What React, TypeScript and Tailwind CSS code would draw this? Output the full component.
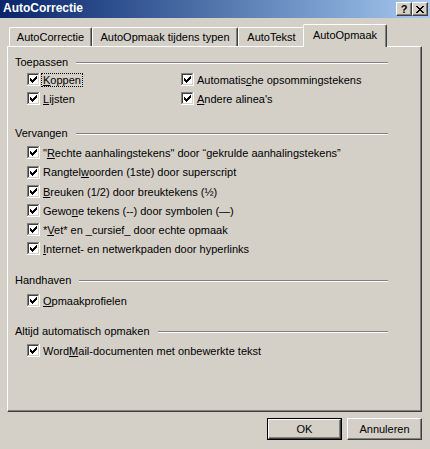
import React from 'react'

// classic 13x13 sunken checkbox with tick, drawn pixel by pixel
const tick: [number, number, number][] = [
  [9, 3, 1],
  [8, 4, 2],
  [3, 5, 1],
  [7, 5, 3],
  [3, 6, 2],
  [6, 6, 3],
  [3, 7, 5],
  [4, 8, 3],
  [5, 9, 1],
]

const CheckBox = () => (
  <svg width="13" height="13" viewBox="0 0 13 13" shapeRendering="crispEdges" className="shrink-0">
    <rect x="0" y="0" width="12" height="1" fill="#808080" />
    <rect x="0" y="0" width="1" height="12" fill="#808080" />
    <rect x="1" y="1" width="10" height="1" fill="#404040" />
    <rect x="1" y="1" width="1" height="10" fill="#404040" />
    <rect x="0" y="12" width="13" height="1" fill="#ffffff" />
    <rect x="12" y="0" width="1" height="13" fill="#ffffff" />
    <rect x="1" y="11" width="11" height="1" fill="#d4d0c8" />
    <rect x="11" y="1" width="1" height="11" fill="#d4d0c8" />
    <rect x="2" y="2" width="9" height="9" fill="#ffffff" />
    {tick.map(([x, y, w], i) => (
      <rect key={i} x={x} y={y} width={w} height="1" fill="#000000" />
    ))}
  </svg>
)

const Option = ({ children, focus = false }: { children: React.ReactNode; focus?: boolean }) => (
  <div className="flex items-center h-[19px]">
    <CheckBox />
    <span
      className={`ml-[1px] px-[1px] leading-[12px] border whitespace-nowrap ${
        focus ? 'border-dotted border-black' : 'border-transparent'
      }`}
    >
      {children}
    </span>
  </div>
)

const GroupHeader = ({ label }: { label: string }) => (
  <div className="flex items-center h-[13px] w-[373px]">
    <span className="leading-[13px] whitespace-nowrap">{label}</span>
    <div className="flex-1 ml-[8px] h-[2px] border-t border-t-[#808080] border-b border-b-white" />
  </div>
)

const Tab = ({ label, className, active = false }: { label: string; className: string; active?: boolean }) =>
  active ? (
    <div
      className={`relative z-10 -mx-[2px] -mb-px h-[23px] bg-[#d4d0c8] border-l border-t border-white border-r border-r-[#404040] shadow-[inset_-1px_0_0_#808080] rounded-t-[2px] pt-[4px] text-center leading-[13px] whitespace-nowrap ${className}`}
    >
      {label}
    </div>
  ) : (
    <div
      className={`h-[19px] bg-[#d4d0c8] border-l border-t border-white border-r border-r-[#404040] shadow-[inset_-1px_0_0_#808080] rounded-t-[2px] pt-[3px] text-center leading-[13px] whitespace-nowrap ${className}`}
    >
      {label}
    </div>
  )

const raised =
  'bg-[#d4d0c8] border-l border-t border-white border-r border-b border-r-[#404040] border-b-[#404040] shadow-[inset_-1px_-1px_0_#808080]'

export default function App() {
  return (
    <div className="w-[430px] h-[449px] overflow-hidden bg-[#d4d0c8] text-black text-[11px] font-['Liberation_Sans',Arial,sans-serif]">
      {/* title bar */}
      <div className="flex h-[18px] bg-gradient-to-r from-[#0a246a] to-[#a6caf0]">
        <span className="pl-[3px] text-[12px] leading-[17px] font-bold text-white">AutoCorrectie</span>
        <div className="ml-auto mr-[2px] mt-[2px] flex">
          <div className={`w-[16px] h-[14px] flex items-center justify-center font-bold text-[11px] leading-none ${raised}`}>
            ?
          </div>
          <div className={`w-[16px] h-[14px] flex items-center justify-center ${raised}`}>
            <svg width="8" height="7" viewBox="0 0 8 7" shapeRendering="crispEdges">
              <path
                d="M0 0h2v1h-2zM6 0h2v1h-2zM1 1h2v1h-2zM5 1h2v1h-2zM2 2h4v1h-4zM3 3h2v1h-2zM2 4h4v1h-4zM1 5h2v1h-2zM5 5h2v1h-2zM0 6h2v1h-2zM6 6h2v1h-2z"
                fill="#000"
              />
            </svg>
          </div>
        </div>
      </div>

      <div className="ml-[7px] w-[415px]">
        {/* tabs */}
        <div className="flex items-end h-[28px] pl-[2px]">
          <Tab label="AutoCorrectie" className="w-[83px]" />
          <Tab label="AutoOpmaak tijdens typen" className="w-[146px]" />
          <Tab label="AutoTekst" className="w-[67px]" />
          <Tab label="AutoOpmaak" className="w-[84px]" active />
        </div>

        {/* panel */}
        <div className="h-[366px] border-l border-t border-white border-r border-b border-r-[#404040] border-b-[#404040] shadow-[inset_-1px_-1px_0_#808080] pl-[7px] pt-[9px]">
          <GroupHeader label="Toepassen" />
          <div className="mt-[1px] pl-[12px] grid grid-cols-[154px_1fr]">
            <Option focus>
              <u>K</u>oppen
            </Option>
            <Option>
              Automatis<u>c</u>he opsommingstekens
            </Option>
            <Option>
              <u>L</u>ijsten
            </Option>
            <Option>
              <u>A</u>ndere alinea's
            </Option>
          </div>

          <div className="mt-[19px]">
            <GroupHeader label="Vervangen" />
          </div>
          <div className="mt-[3px] pl-[12px]">
            <Option>
              "<u>R</u>echte aanhalingstekens" door “gekrulde aanhalingstekens”
            </Option>
            <div className="h-[20px] flex items-center">
              <Option>
                Rangtel<u>w</u>oorden (1ste) door superscript
              </Option>
            </div>
            <Option>
              <u>B</u>reuken (1/2) door breuktekens (½)
            </Option>
            <Option>
              Gewo<u>n</u>e tekens (--) door symbolen (—)
            </Option>
            <Option>
              *<u>V</u>et* en _cursief_ door echte opmaak
            </Option>
            <Option>
              <u>I</u>nternet- en netwerkpaden door hyperlinks
            </Option>
          </div>

          <div className="mt-[16px]">
            <GroupHeader label="Handhaven" />
          </div>
          <div className="mt-[4px] pl-[12px]">
            <Option>
              <u>O</u>pmaakprofielen
            </Option>
          </div>

          <div className="mt-[15px]">
            <GroupHeader label="Altijd automatisch opmaken" />
          </div>
          <div className="mt-[3px] pl-[12px]">
            <Option>
              Word<u>M</u>ail-documenten met onbewerkte tekst
            </Option>
          </div>
        </div>
      </div>

      {/* buttons */}
      <div className="flex justify-end gap-[5px] mt-[6px] pr-[8px]">
        <button className="w-[75px] h-[22px] p-0 border border-black bg-[#d4d0c8]">
          <div className={`h-full flex items-center justify-center leading-[13px] ${raised}`}>OK</div>
        </button>
        <button className={`w-[75px] h-[22px] p-0 flex items-center justify-center leading-[13px] ${raised}`}>
          Annuleren
        </button>
      </div>
    </div>
  )
}
